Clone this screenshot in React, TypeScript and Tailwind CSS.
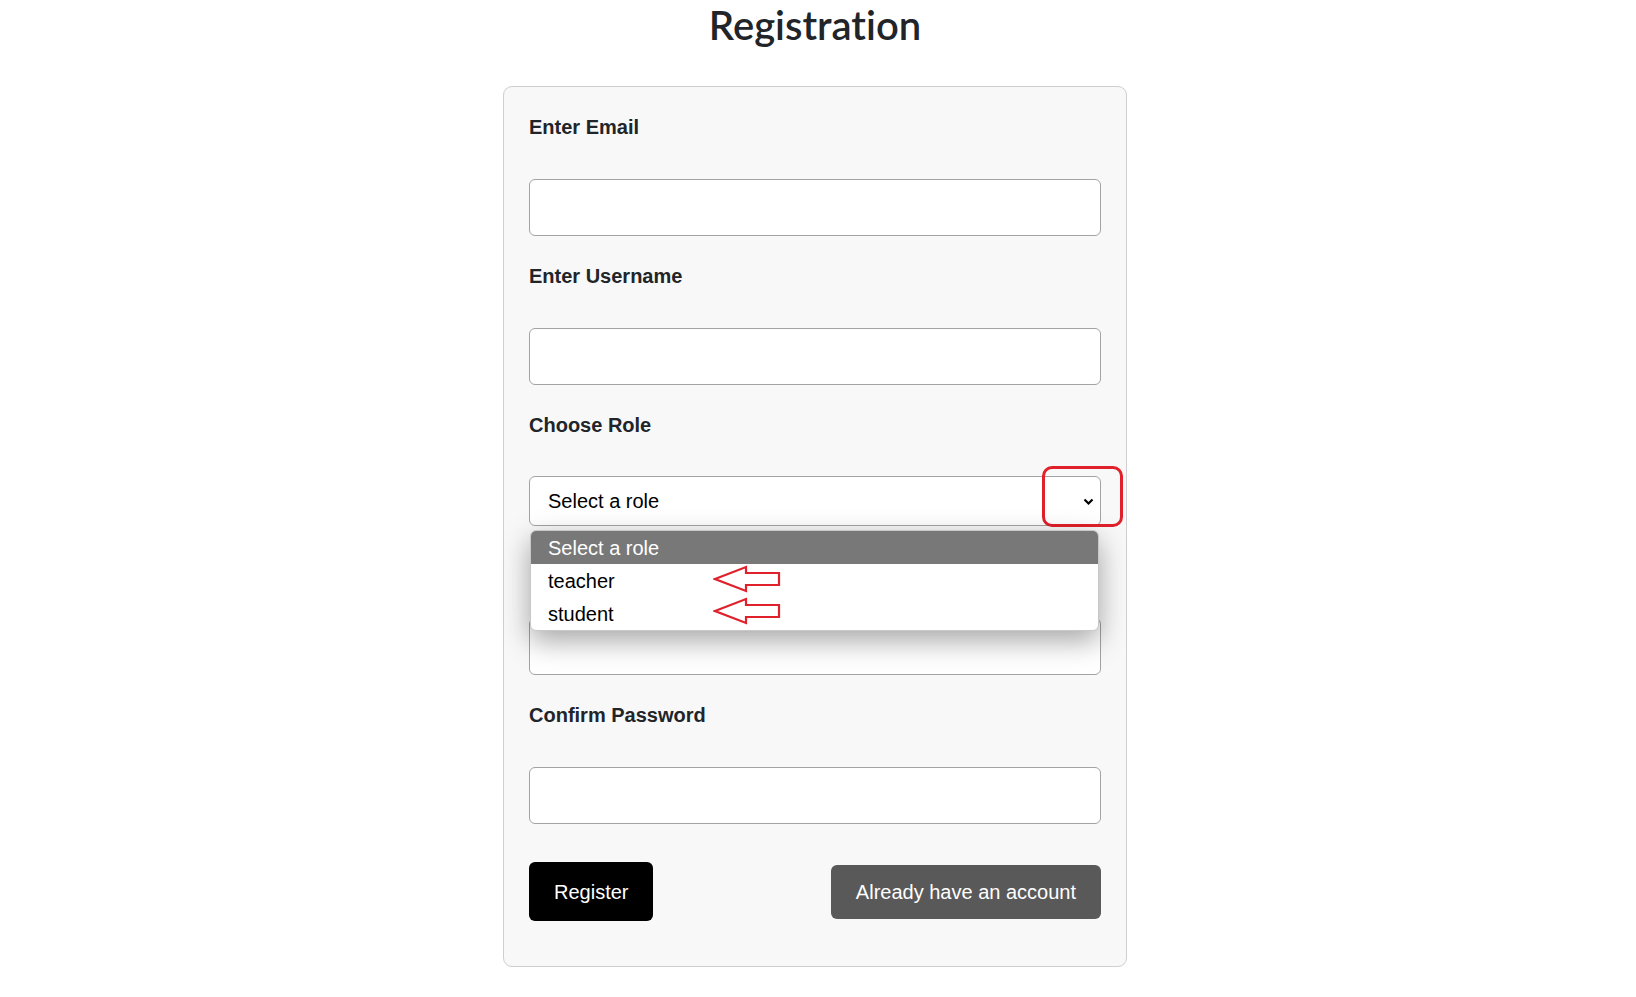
import React from "react";

const sans = { fontFamily: '"Liberation Sans", Arial, sans-serif' };

function Label({ children, hidden }: { children: React.ReactNode; hidden?: boolean }) {
  return (
    <label className={"block h-6 text-[20px] leading-6 font-bold text-[#212529]" + (hidden ? " invisible" : "")}>
      {children}
    </label>
  );
}

function Input() {
  return <input className="mt-10 block h-[57px] w-full rounded-[6px] border border-[#a3a3a3] bg-white outline-none" />;
}

function Arrow() {
  return (
    <svg width="68" height="28" viewBox="0 0 68 28">
      <polygon
        points="2,14 33,2 33,8 66,8 66,20 33,20 33,26"
        fill="white"
        stroke="#e0202a"
        strokeWidth="2.2"
        strokeLinejoin="miter"
      />
    </svg>
  );
}

export default function App() {
  return (
    <div className="min-h-[997px] w-full bg-white" style={sans}>
      <div className="flex flex-col items-center pr-[6px]">
        <h1
          className="mt-[1px] h-12 text-[40px] leading-[48px] font-semibold text-[#212529] [font-variant-ligatures:none]"
          style={{ fontFamily: 'Lato, "Noto Sans", sans-serif' }}
        >
          Registration
        </h1>
        <div className="mt-[37px] w-[624px] rounded-[9px] border border-[#cfcfcf] bg-[#f8f8f8] px-[25px] pt-[28px] pb-[45px]">
          <Label>Enter Email</Label>
          <Input />
          <div className="mt-7">
            <Label>Enter Username</Label>
          </div>
          <Input />
          <div className="mt-7">
            <Label>Choose Role</Label>
          </div>
          <div className="relative mt-[39px] flex h-[50px] w-full items-center justify-between rounded-[6px] border border-[#a3a3a3] bg-white pl-[18px] pr-[6px]">
            <span className="text-[20px] leading-6 text-black">Select a role</span>
            <svg width="11" height="8" viewBox="0 0 11 8" className="mt-[1px]">
              <polyline points="1.5,1.5 5.5,5.5 9.5,1.5" fill="none" stroke="#000" strokeWidth="2.2" />
            </svg>
            <div className="pointer-events-none absolute left-[512px] top-[-11px] h-[61px] w-[81px] rounded-[10px] border-[3px] border-[#e0202a]" />
            <div className="absolute left-0 top-[53px] z-10 w-[569px] rounded-[6px] border border-[#c8c8c8] bg-white shadow-[0_10px_28px_rgba(0,0,0,0.35)]">
              <div className="flex h-[33px] items-center rounded-t-[5px] bg-[#787878] pl-[17px] text-[20px] text-white">
                Select a role
              </div>
              <div className="relative flex h-[33px] items-center pl-[17px] text-[20px] text-black">
                teacher
                <div className="absolute left-[182px] top-[1px]">
                  <Arrow />
                </div>
              </div>
              <div className="relative flex h-[33px] items-center pl-[17px] text-[20px] text-black">
                student
                <div className="absolute left-[182px] top-[0px]">
                  <Arrow />
                </div>
              </div>
            </div>
          </div>
          <div className="mt-7">
            <Label hidden>Enter Password</Label>
          </div>
          <Input />
          <div className="mt-7">
            <Label>Confirm Password</Label>
          </div>
          <Input />
          <div className="mt-[38px] flex items-center justify-between">
            <button className="h-[59px] rounded-[6px] bg-black px-[25px] text-[20px] text-white">Register</button>
            <button className="h-[54px] rounded-[6px] bg-[#595959] px-[25px] text-[20px] text-white">
              Already have an account
            </button>
          </div>
        </div>
      </div>
    </div>
  );
}
